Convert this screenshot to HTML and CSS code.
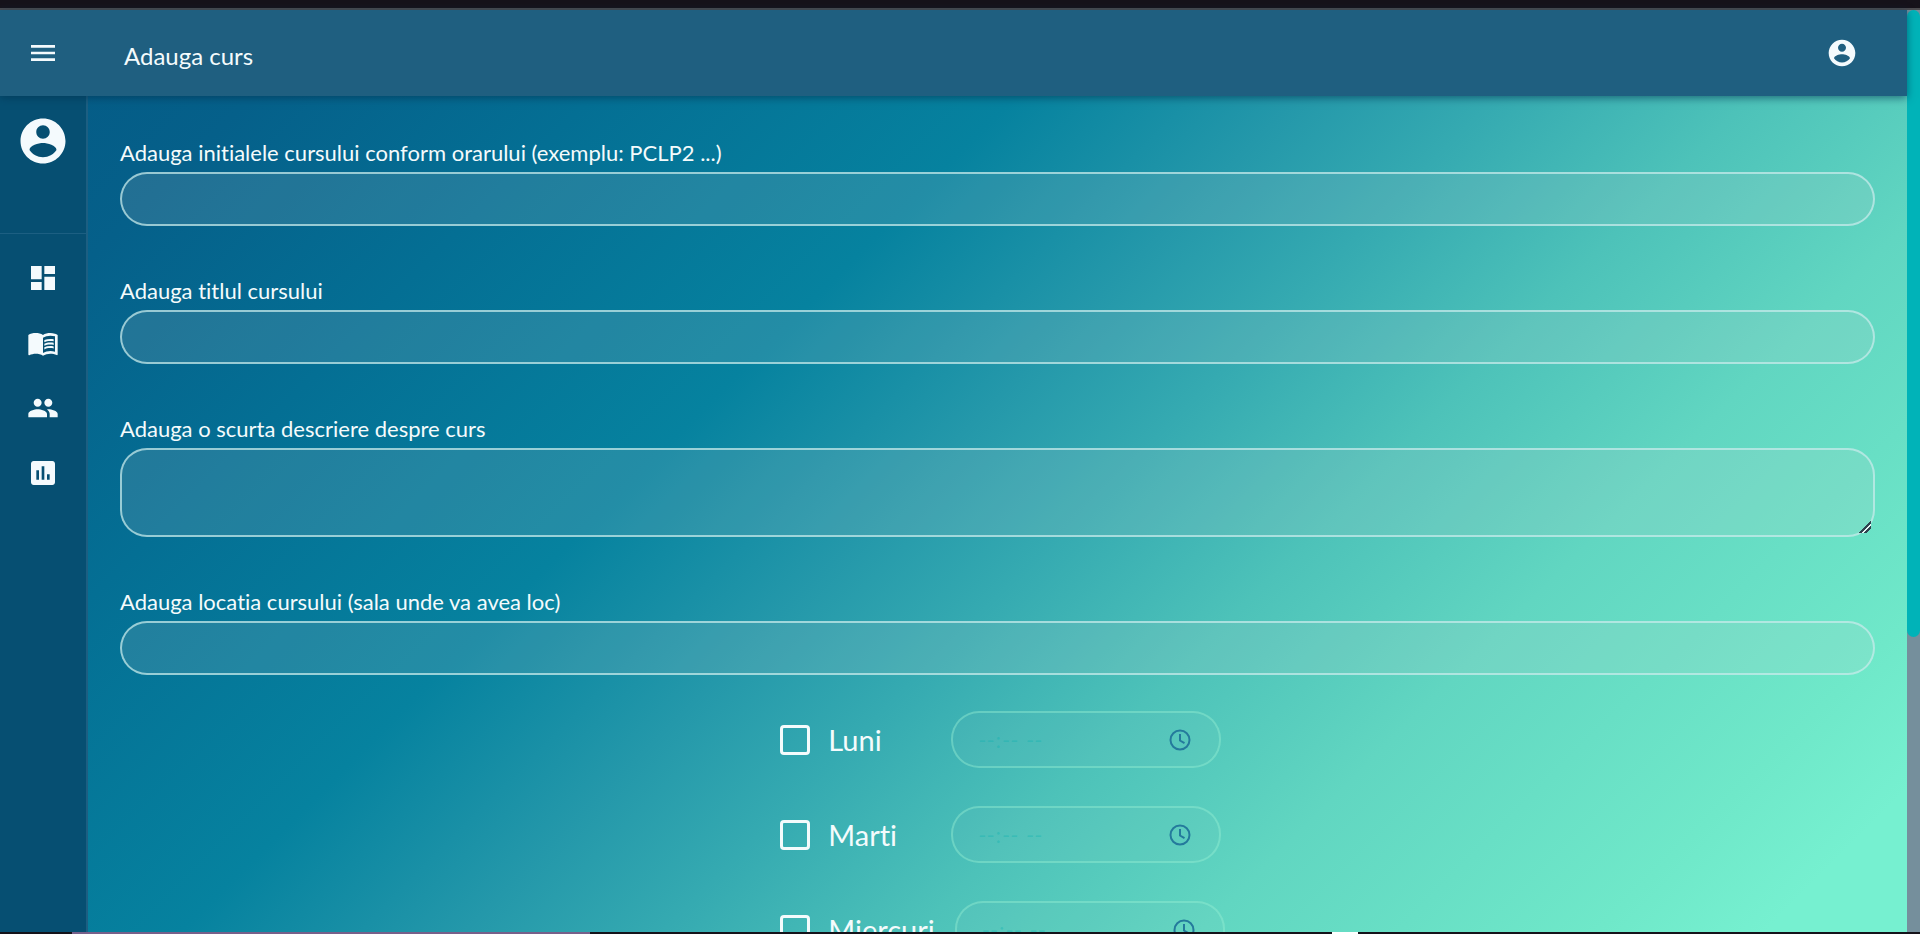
FILE: index.html
```html
<!DOCTYPE html>
<html lang="ro">
<head>
<meta charset="utf-8">
<title>Adauga curs</title>
<link rel="stylesheet" href="styles.css">
</head>
<body>
<div class="edge-top"></div>
<div class="window">
  <div class="app">
    <header class="topbar">
      <button class="icon-button menu-button" type="button" aria-label="Meniu">
        <svg class="icon" viewBox="0 0 24 24"><path d="M3 18h18v-2H3v2zm0-5h18v-2H3v2zm0-7v2h18V6H3z"/></svg>
      </button>
      <h1 class="title">Adauga curs</h1>
      <button class="icon-button account-button" type="button" aria-label="Cont">
        <svg class="icon" viewBox="0 0 24 24"><path d="M12 2C6.48 2 2 6.48 2 12s4.48 10 10 10 10-4.48 10-10S17.52 2 12 2zm0 3c1.66 0 3 1.34 3 3s-1.34 3-3 3-3-1.34-3-3 1.34-3 3-3zm0 14.2c-2.5 0-4.71-1.28-6-3.22.03-1.99 4-3.08 6-3.08 1.99 0 5.97 1.09 6 3.08-1.29 1.94-3.5 3.22-6 3.22z"/></svg>
      </button>
    </header>
    <div class="body">
      <nav class="sidebar" aria-label="Navigare">
        <div class="profile">
          <svg class="avatar" viewBox="0 0 24 24"><path d="M12 2C6.48 2 2 6.48 2 12s4.48 10 10 10 10-4.48 10-10S17.52 2 12 2zm0 3c1.66 0 3 1.34 3 3s-1.34 3-3 3-3-1.34-3-3 1.34-3 3-3zm0 14.2c-2.5 0-4.71-1.28-6-3.22.03-1.99 4-3.08 6-3.08 1.99 0 5.97 1.09 6 3.08-1.29 1.94-3.5 3.22-6 3.22z"/></svg>
        </div>
        <div class="links">
          <a class="link" href="#panou" aria-label="Panou"><svg class="icon" viewBox="0 0 24 24"><path d="M3 13h8V3H3v10zm0 8h8v-6H3v6zm10 0h8V11h-8v10zm0-18v6h8V3h-8z"/></svg></a>
          <a class="link" href="#cursuri" aria-label="Cursuri"><svg class="icon" viewBox="0 0 24 24"><path d="M21 5c-1.11-.35-2.33-.5-3.5-.5-1.95 0-4.05.4-5.5 1.5-1.45-1.1-3.55-1.5-5.5-1.5S2.45 4.9 1 6v14.65c0 .25.25.5.5.5.1 0 .15-.05.25-.05C3.1 20.45 5.05 20 6.5 20c1.95 0 4.05.4 5.5 1.5 1.35-.85 3.8-1.5 5.5-1.5 1.65 0 3.35.3 4.75 1.05.1.05.15.05.25.05.25 0 .5-.25.5-.5V6c-.6-.45-1.25-.75-2-1zm0 13.5c-1.1-.35-2.3-.5-3.5-.5-1.7 0-4.15.65-5.5 1.5V8c1.35-.85 3.8-1.5 5.5-1.5 1.2 0 2.4.15 3.5.5v11.5z"/><path d="M17.5 10.5c.88 0 1.73.09 2.5.26V9.24c-.79-.15-1.64-.24-2.5-.24-1.7 0-3.24.29-4.5.83v1.66c1.13-.64 2.7-.99 4.5-.99zM13 12.49v1.66c1.13-.64 2.7-.99 4.5-.99.88 0 1.73.09 2.5.26V11.9c-.79-.15-1.64-.24-2.5-.24-1.7 0-3.24.3-4.5.83zM17.5 14.33c-1.7 0-3.24.29-4.5.83v1.66c1.13-.64 2.7-.99 4.5-.99.88 0 1.73.09 2.5.26v-1.52c-.79-.16-1.64-.24-2.5-.24z"/></svg></a>
          <a class="link" href="#studenti" aria-label="Studenti"><svg class="icon" viewBox="0 0 24 24"><path d="M16 11c1.66 0 2.99-1.34 2.99-3S17.66 5 16 5c-1.66 0-3 1.34-3 3s1.34 3 3 3zm-8 0c1.66 0 2.99-1.34 2.99-3S9.66 5 8 5C6.34 5 5 6.34 5 8s1.34 3 3 3zm0 2c-2.33 0-7 1.17-7 3.5V19h14v-2.500c0-2.330-4.670-3.500-7-3.500zm8 0c-.29 0-.62.020-.97.050 1.160.840 1.970 1.970 1.970 3.450V19h6v-2.500c0-2.330-4.670-3.500-7-3.500z"/></svg></a>
          <a class="link" href="#statistici" aria-label="Statistici"><svg class="icon" viewBox="0 0 24 24"><path d="M19 3H5c-1.100 0-2 .9-2 2v14c0 1.100.9 2 2 2h14c1.100 0 2-.9 2-2V5c0-1.100-.9-2-2-2zM9 17H7v-7h2v7zm4 0h-2V7h2v10zm4 0h-2v-4h2v4z"/></svg></a>
        </div>
      </nav>
      <main class="content">
        <form class="form">
          <div class="field">
            <label class="label" for="initiale">Adauga initialele cursului conform orarului (exemplu: PCLP2 ...)</label>
            <input class="control" id="initiale" type="text">
          </div>
          <div class="field">
            <label class="label" for="titlu">Adauga titlul cursului</label>
            <input class="control" id="titlu" type="text">
          </div>
          <div class="field">
            <label class="label" for="descriere">Adauga o scurta descriere despre curs</label>
            <textarea class="control control-area" id="descriere"></textarea>
          </div>
          <div class="field">
            <label class="label" for="locatie">Adauga locatia cursului (sala unde va avea loc)</label>
            <input class="control" id="locatie" type="text">
          </div>
          <div class="days">
            <div class="day">
              <input class="check" id="luni" type="checkbox">
              <label class="day-name" for="luni">Luni</label>
              <div class="time">
                <input class="time-input" type="time" aria-label="Ora luni" disabled>
                <svg class="clock" viewBox="0 0 22 22"><circle cx="11" cy="11" r="9.500"/><path d="M11 5v6.500l4.500 2.700"/></svg>
              </div>
            </div>
            <div class="day">
              <input class="check" id="marti" type="checkbox">
              <label class="day-name" for="marti">Marti</label>
              <div class="time">
                <input class="time-input" type="time" aria-label="Ora marti" disabled>
                <svg class="clock" viewBox="0 0 22 22"><circle cx="11" cy="11" r="9.500"/><path d="M11 5v6.500l4.500 2.700"/></svg>
              </div>
            </div>
            <div class="day">
              <input class="check" id="miercuri" type="checkbox">
              <label class="day-name" for="miercuri">Miercuri</label>
              <div class="time">
                <input class="time-input" type="time" aria-label="Ora miercuri" disabled>
                <svg class="clock" viewBox="0 0 22 22"><circle cx="11" cy="11" r="9.500"/><path d="M11 5v6.500l4.500 2.700"/></svg>
              </div>
            </div>
          </div>
        </form>
      </main>
    </div>
  </div>
  <div class="scroll-track"><div class="scroll-thumb"></div></div>
</div>
<div class="edge-bottom"><span class="edge-tab"></span><span class="edge-mark"></span></div>
</body>
</html>
```
FILE: styles.css
```css
* { box-sizing: border-box; }

body {
  margin: 0;
  height: 100vh;
  display: flex;
  flex-direction: column;
  overflow: hidden;
  font-family: Lato, "Open Sans", sans-serif;
  font-variant-ligatures: none;
  color: #f4fbfc;
}

.edge-top {
  flex: none;
  height: 10px;
  background: #16131b;
  border-bottom: 2px solid #4c4c50;
}

.window { flex: 1; min-height: 0; display: flex; background: #758f9c; }

.app {
  flex: 1;
  min-width: 0;
  display: flex;
  flex-direction: column;
  background: linear-gradient(135deg, #045984 0%, #05608a 12%, #046f94 24%, #06829f 39%, #2498aa 49%, #35aab1 56%, #4dc2b9 65%, #61d6c1 75%, #6fe8c9 89%, #76f0d0 95%);
}

.topbar {
  flex: none;
  height: 86px;
  display: flex;
  align-items: center;
  background: #1f5f80;
  box-shadow: 0 2px 8px rgba(0, 50, 80, 0.6);
  z-index: 1;
}

.icon-button {
  display: flex;
  justify-content: center;
  padding: 0;
  border: 0;
  background: none;
  color: inherit;
}

.menu-button { width: 86px; }
.account-button { margin: 0 49px 0 auto; }

.icon { width: 32px; height: 32px; fill: #f4fafd; }

.title {
  margin: 6px 0 0 38px;
  font-size: 24px;
  font-weight: 400;
  line-height: 32px;
}

.body { flex: 1; min-height: 0; display: flex; }

.sidebar {
  flex: none;
  width: 88px;
  background: #064f72;
  border-right: 2px solid #1c5f82;
}

.profile {
  display: flex;
  justify-content: center;
  height: 138px;
  padding-top: 18px;
  border-bottom: 1px solid #1c5f82;
}

.avatar { width: 54px; height: 54px; fill: #f4fafd; }

.links { display: flex; flex-direction: column; padding-top: 11px; }

.link {
  display: flex;
  align-items: center;
  justify-content: center;
  height: 65px;
}

.content { flex: 1; min-width: 0; overflow: hidden; padding: 42px 32px 0; }

.form { display: flex; flex-direction: column; }

.field { display: flex; flex-direction: column; gap: 4px; margin-bottom: 50px; }

.field:nth-of-type(4) { margin-bottom: 36px; }

.label { font-size: 22px; line-height: 30px; }

.control {
  width: 100%;
  height: 54px;
  padding: 8px 24px;
  border: 2px solid rgba(200, 235, 236, 0.72);
  border-radius: 27px;
  background: rgba(201, 205, 205, 0.15);
  color: inherit;
  font: inherit;
  font-size: 22px;
}

.control-area { height: 89px; resize: vertical; }

.control-area::-webkit-resizer {
  background: linear-gradient(135deg, transparent 8px, #2f4350 8px, #2f4350 10px, #e8f8f6 10px, #e8f8f6 12px, #2f4350 12px, #2f4350 14px, transparent 14px) 1px 1px / 12px 12px no-repeat;
}

.days {
  align-self: center;
  display: flex;
  flex-direction: column;
  gap: 38px;
  padding-left: 10px;
}

.day { display: flex; align-items: center; }

.check {
  appearance: none;
  width: 30px;
  height: 30px;
  margin: 0 18px 0 0;
  border: 3px solid #f4fbfc;
  border-radius: 4px;
}

.day-name {
  min-width: 103px;
  margin-right: 20px;
  font-size: 29px;
  line-height: 40px;
}

.time {
  display: flex;
  align-items: center;
  width: 270px;
  height: 57px;
  padding: 0 28px 0 24px;
  border: 2px solid rgba(150, 240, 212, 0.42);
  border-radius: 28px;
  background: rgba(170, 205, 205, 0.06);
}

.time-input {
  flex: 1;
  min-width: 0;
  padding: 0;
  border: 0;
  background: none;
  color: rgba(0, 175, 175, 0.3);
  font: inherit;
  font-size: 22px;
}

.time-input::-webkit-calendar-picker-indicator { display: none; }

.clock {
  width: 22px;
  height: 22px;
  fill: none;
  stroke: #247a9c;
  stroke-width: 2;
}

.scroll-track { flex: none; width: 13px; background: #758f9c; }

.scroll-thumb { height: 68%; border-radius: 7px; background: #00b3b8; }

.edge-bottom { flex: none; display: flex; height: 2px; background: #15131a; }

.edge-tab { width: 27%; margin-left: 72px; background: #77608a; }

.edge-mark { width: 26px; margin-left: auto; margin-right: 562px; background: #fff; }
```
